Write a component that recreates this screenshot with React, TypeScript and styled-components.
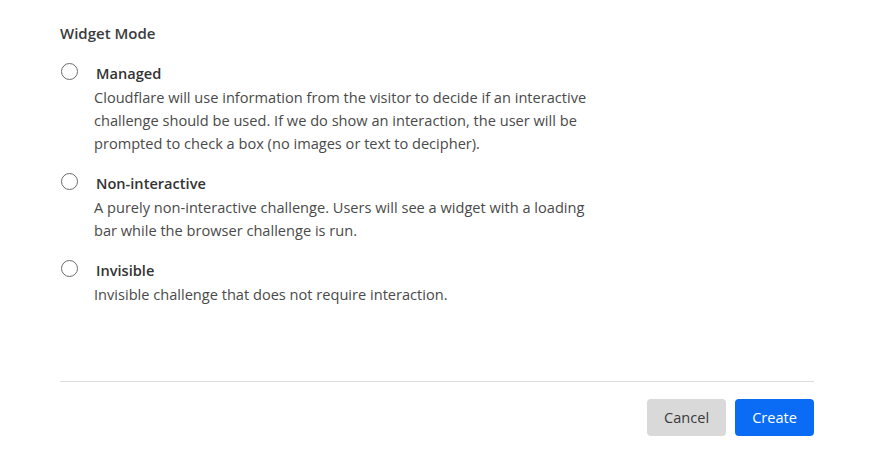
import React from "react";
import styled, { createGlobalStyle } from "styled-components";

const Global = createGlobalStyle`
  html, body { margin: 0; padding: 0; background: #fff; }
  body { font-family: "Open Sans", "Noto Sans", sans-serif; color: #333; }
`;

const Page = styled.div`
  width: 895px;
  height: 454px;
  box-sizing: border-box;
  padding: 23px 81px 0 60px;
  display: flex;
  flex-direction: column;
`;

const Heading = styled.div`
  font-size: 15px;
  font-weight: 600;
  color: #3a3c3e;
  line-height: 20px;
  margin-bottom: 20px;
`;

const Options = styled.div`
  display: flex;
  flex-direction: column;
  gap: 18px;
`;

const Option = styled.label`
  display: grid;
  grid-template-columns: 34px 1fr;
  align-items: start;
`;

const Radio = styled.span`
  width: 17px;
  height: 17px;
  border: 1.3px solid #6b6b6b;
  border-radius: 50%;
  margin: 0 0 0 1px;
  box-sizing: border-box;
`;

const Label = styled.div`
  font-size: 14.6px;
  font-weight: 600;
  color: #333;
  line-height: 21px;
  margin-left: 2px;
`;

const Desc = styled.div`
  grid-column: 2;
  font-size: 14.6px;
  line-height: 23px;
  color: #4a4a4a;
  max-width: 500px;
  margin-top: 2px;
`;

const Footer = styled.div`
  margin-top: auto;
  margin-bottom: 18px;
  border-top: 1px solid #dcdcdc;
  padding-top: 17px;
  display: flex;
  justify-content: flex-end;
  gap: 9px;
`;

const Button = styled.button<{ $primary?: boolean }>`
  height: 37px;
  padding: 0 17px 1px;
  border: none;
  border-radius: 4px;
  font-family: inherit;
  font-size: 14.6px;
  background: ${(p) => (p.$primary ? "#0a6cf5" : "#d9d9d9")};
  color: ${(p) => (p.$primary ? "#fff" : "#3a3a3a")};
`;

const options = [
  {
    label: "Managed",
    desc: "Cloudflare will use information from the visitor to decide if an interactive challenge should be used. If we do show an interaction, the user will be prompted to check a box (no images or text to decipher).",
  },
  {
    label: "Non-interactive",
    desc: "A purely non-interactive challenge. Users will see a widget with a loading bar while the browser challenge is run.",
  },
  {
    label: "Invisible",
    desc: "Invisible challenge that does not require interaction.",
  },
];

export default function App() {
  return (
    <>
      <Global />
      <Page>
        <Heading>Widget Mode</Heading>
        <Options>
          {options.map((o) => (
            <Option key={o.label}>
              <Radio />
              <Label>{o.label}</Label>
              <Desc>{o.desc}</Desc>
            </Option>
          ))}
        </Options>
        <Footer>
          <Button>Cancel</Button>
          <Button $primary>Create</Button>
        </Footer>
      </Page>
    </>
  );
}
